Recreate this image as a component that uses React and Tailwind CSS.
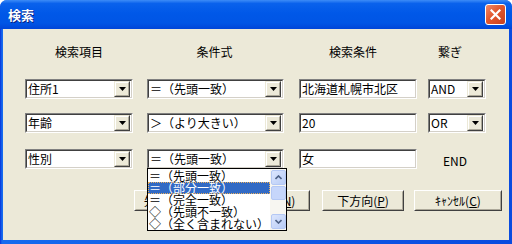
import React from 'react';

const font = 'font-["Noto_Sans_CJK_JP","Noto_Sans_CJK_SC",sans-serif]';

const Arrow = () => (
    <svg width="7" height="4" viewBox="0 0 7 4">
        <path d="M0 0h7L3.5 4z" fill="#000" />
    </svg>
);

const DropBtn = () => (
    <div className="w-[16px] h-[16px] mr-[1px] border border-t-[#ECE9D8] border-l-[#ECE9D8] border-r-[#404040] border-b-[#404040]">
        <div className="w-full h-full bg-[#ECE9D8] border border-t-white border-l-white border-r-[#ACA899] border-b-[#ACA899] flex items-center justify-center">
            <Arrow />
        </div>
    </div>
);

const Sunken = ({ className, children }) => (
    <div className={`h-[20px] border border-t-[#808080] border-l-[#808080] border-r-white border-b-white ${className}`}>
        <div className="h-full bg-white border border-t-[#404040] border-l-[#404040] border-r-[#D4D0C8] border-b-[#D4D0C8] flex items-center">
            {children}
        </div>
    </div>
);

const Combo = ({ className, text }) => (
    <Sunken className={className}>
        <span className="flex-1 pl-[1px] text-[12px] leading-[14px] text-black whitespace-nowrap">{text}</span>
        <DropBtn />
    </Sunken>
);

const Field = ({ className, text }) => (
    <Sunken className={className}>
        <span className="pl-[1px] text-[12px] leading-[14px] text-black whitespace-nowrap">{text}</span>
    </Sunken>
);

const Button = ({ className, children }) => (
    <div className={`h-[21px] border border-t-white border-l-white border-r-[#404040] border-b-[#404040] ${className}`}>
        <div className="w-full h-full bg-[#ECE9D8] border border-r-[#ACA899] border-b-[#ACA899] border-t-[#ECE9D8] border-l-[#ECE9D8] flex items-center justify-center text-[12px] leading-[14px] text-black whitespace-nowrap">
            {children}
        </div>
    </div>
);

const ScrollBtn = ({ up }) => (
    <div className="w-[15px] h-[15px] rounded-[2px] bg-[linear-gradient(135deg,#DCE6FD,#B8CCF6)] border border-[#B4C8F4] flex items-center justify-center">
        <svg width="7" height="5" viewBox="0 0 7 5">
            <path d={up ? 'M0.5 4L3.5 1L6.5 4' : 'M0.5 1L3.5 4L6.5 1'} stroke="#4D6185" strokeWidth="1.6" fill="none" />
        </svg>
    </div>
);

const options = ['＝（先頭一致）', '＝（部分一致）', '＝（完全一致）', '◇（先頭不一致）', '◇（全く含まれない）'];

export default function App() {
    return (
        <div className={`w-[512px] h-[244px] flex flex-col rounded-t-[7px] overflow-hidden bg-[linear-gradient(to_right,#0831D9,#166AEE_2px,#0A4BDF)] ${font}`}>
            {/* title bar */}
            <div className="h-[29px] shrink-0 flex items-center justify-between pl-[8px] pr-[6px] bg-[linear-gradient(to_bottom,#3D8CF7_0%,#0A62EC_12%,#0058E8_45%,#0055E5_80%,#0045D8_100%)]">
                <span className="text-white font-bold text-[13px] leading-[14px] [text-shadow:1px_1px_0_#0A1E80]">検索</span>
                <div className="w-[21px] h-[21px] rounded-[3px] border border-white bg-[linear-gradient(135deg,#F08A6A,#E2572E_45%,#C8401E)] flex items-center justify-center">
                    <svg width="11" height="11" viewBox="0 0 11 11">
                        <path d="M1.5 1.5L9.5 9.5M9.5 1.5L1.5 9.5" stroke="#fff" strokeWidth="2.2" strokeLinecap="square" />
                    </svg>
                </div>
            </div>

            {/* body */}
            <div className="flex-1 mx-[3px] mb-[4px] bg-[#ECE9D8] relative pl-[22px] text-black">
                <div className="flex mt-[16px] h-[14px] text-[12px] leading-[14px]">
                    <div className="w-[108px] text-center">検索項目</div>
                    <div className="w-[137px] ml-[14px] text-center pr-[2px]">条件式</div>
                    <div className="w-[118px] ml-[15px] text-center pr-[10px]">検索条件</div>
                    <div className="w-[58px] ml-[11px] text-center pr-[14px]">繋ぎ</div>
                </div>

                <div className="flex mt-[20px]">
                    <Combo className="w-[108px]" text="住所1" />
                    <Combo className="w-[137px] ml-[14px]" text="＝（先頭一致）" />
                    <Field className="w-[118px] ml-[15px]" text="北海道札幌市北区" />
                    <Combo className="w-[58px] ml-[11px]" text="AND" />
                </div>

                <div className="flex mt-[14px]">
                    <Combo className="w-[108px]" text="年齢" />
                    <Combo className="w-[137px] ml-[14px]" text="＞（より大きい）" />
                    <Field className="w-[118px] ml-[15px]" text="20" />
                    <Combo className="w-[58px] ml-[11px]" text="OR" />
                </div>

                <div className="flex mt-[16px] items-center">
                    <Combo className="w-[108px]" text="性別" />
                    <Combo className="w-[137px] ml-[14px]" text="＝（先頭一致）" />
                    <Field className="w-[118px] ml-[15px]" text="女" />
                    <div className="w-[58px] ml-[11px] pl-[15px] text-[12px] leading-[14px] pt-[4px]">END</div>
                </div>

                <div className="flex mt-[21px] ml-[109px]">
                    <Button className="w-[82px]">先頭から(<u>F</u>)</Button>
                    <Button className="w-[82px] ml-[12px]">上方向(<u>N</u>)</Button>
                    <Button className="w-[82px] ml-[12px]">下方向(<u>P</u>)</Button>
                    <Button className="w-[88px] ml-[10px]">ｷｬﾝｾﾙ(<u>C</u>)</Button>
                </div>

                {/* open dropdown list */}
                <div className="absolute left-[144px] top-[139px] w-[140px] h-[63px] bg-white border border-black flex">
                    <div className="flex-1 pt-[1px]">
                        {options.map((o, i) => (
                            <div
                                key={o}
                                className={`h-[12px] pl-[1px] text-[12px] leading-[12px] whitespace-nowrap ${i === 1 ? 'bg-[#316AC5] text-white outline-1 outline-dotted outline-[#E8B060] -outline-offset-1' : 'text-black'}`}
                            >
                                {o}
                            </div>
                        ))}
                    </div>
                    <div className="w-[16px] bg-[#F7F6F1] flex flex-col items-center justify-between py-[1px]">
                        <div className="flex flex-col gap-[1px]">
                            <ScrollBtn up />
                            <div className="w-[15px] h-[14px] rounded-[2px] bg-[#C6D6FB] border border-[#B4C8F4]" />
                        </div>
                        <ScrollBtn />
                    </div>
                </div>
            </div>
        </div>
    );
}
